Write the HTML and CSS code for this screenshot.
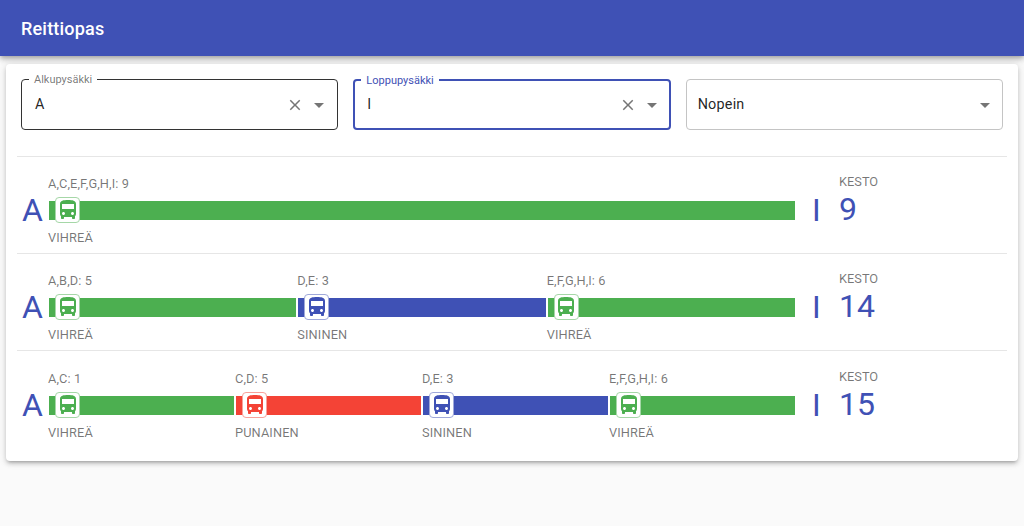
FILE: index.html
```html
<!DOCTYPE html>
<html lang="fi">
<head>
    <meta charset="UTF-8">
    <meta name="viewport" content="width=device-width, initial-scale=1.0">
    <title>Reittiopas</title>
    <link rel="stylesheet" href="styles.css">
</head>
<body>
    <svg class="defs" width="0" height="0">
        <symbol id="bus" viewBox="0 0 24 24">
            <path d="M4 16c0 .88.39 1.67 1 2.22V20c0 .55.45 1 1 1h1c.55 0 1-.45 1-1v-1h8v1c0 .55.45 1 1 1h1c.55 0 1-.45 1-1v-1.78c.61-.55 1-1.34 1-2.22V6c0-3.5-3.58-4-8-4s-8 .5-8 4v10zm3.5 1c-.83 0-1.5-.67-1.5-1.5S6.670 14 7.500 14s1.500.67 1.500 1.500S8.330 17 7.500 17zm9 0c-.83 0-1.500-.67-1.500-1.500s.67-1.500 1.500-1.500 1.500.67 1.500 1.500-.67 1.500-1.500 1.500zm1.500-6H6V6h12v5z"/>
        </symbol>
        <symbol id="clear" viewBox="0 0 24 24">
            <path d="M19 6.410 17.590 5 12 10.590 6.410 5 5 6.410 10.590 12 5 17.590 6.410 19 12 13.410 17.590 19 19 17.590 13.410 12z"/>
        </symbol>
        <symbol id="arrow" viewBox="0 0 24 24">
            <path d="M7 10l5 5 5-5z"/>
        </symbol>
    </svg>

    <header class="appbar">
        <h1>Reittiopas</h1>
    </header>

    <main class="kortti">
        <form class="haku">
            <div class="kentta aktiivinen-tumma">
                <span class="otsikko">Alkupysäkki</span>
                <span class="arvo">A</span>
                <svg class="ikoni tyhjenna"><use href="#clear"/></svg>
                <svg class="ikoni nuoli"><use href="#arrow"/></svg>
            </div>
            <div class="kentta aktiivinen">
                <span class="otsikko">Loppupysäkki</span>
                <span class="arvo">I</span>
                <svg class="ikoni tyhjenna"><use href="#clear"/></svg>
                <svg class="ikoni nuoli"><use href="#arrow"/></svg>
            </div>
            <div class="kentta valinta">
                <span class="arvo">Nopein</span>
                <svg class="ikoni nuoli"><use href="#arrow"/></svg>
            </div>
        </form>

        <section class="reitti">
            <div class="pysakki">A</div>
            <div class="osat">
                <div class="osa vihrea">
                    <div class="pysakit">A,C,E,F,G,H,I: 9</div>
                    <div class="palkki"><span class="bussi"><svg><use href="#bus"/></svg></span></div>
                    <div class="linja">VIHREÄ</div>
                </div>
            </div>
            <div class="pysakki loppu">I</div>
            <div class="kesto"><span>KESTO</span><strong>9</strong></div>
        </section>

        <section class="reitti">
            <div class="pysakki">A</div>
            <div class="osat">
                <div class="osa vihrea">
                    <div class="pysakit">A,B,D: 5</div>
                    <div class="palkki"><span class="bussi"><svg><use href="#bus"/></svg></span></div>
                    <div class="linja">VIHREÄ</div>
                </div>
                <div class="osa sininen">
                    <div class="pysakit">D,E: 3</div>
                    <div class="palkki"><span class="bussi"><svg><use href="#bus"/></svg></span></div>
                    <div class="linja">SININEN</div>
                </div>
                <div class="osa vihrea">
                    <div class="pysakit">E,F,G,H,I: 6</div>
                    <div class="palkki"><span class="bussi"><svg><use href="#bus"/></svg></span></div>
                    <div class="linja">VIHREÄ</div>
                </div>
            </div>
            <div class="pysakki loppu">I</div>
            <div class="kesto"><span>KESTO</span><strong>14</strong></div>
        </section>

        <section class="reitti">
            <div class="pysakki">A</div>
            <div class="osat">
                <div class="osa vihrea">
                    <div class="pysakit">A,C: 1</div>
                    <div class="palkki"><span class="bussi"><svg><use href="#bus"/></svg></span></div>
                    <div class="linja">VIHREÄ</div>
                </div>
                <div class="osa punainen">
                    <div class="pysakit">C,D: 5</div>
                    <div class="palkki"><span class="bussi"><svg><use href="#bus"/></svg></span></div>
                    <div class="linja">PUNAINEN</div>
                </div>
                <div class="osa sininen">
                    <div class="pysakit">D,E: 3</div>
                    <div class="palkki"><span class="bussi"><svg><use href="#bus"/></svg></span></div>
                    <div class="linja">SININEN</div>
                </div>
                <div class="osa vihrea">
                    <div class="pysakit">E,F,G,H,I: 6</div>
                    <div class="palkki"><span class="bussi"><svg><use href="#bus"/></svg></span></div>
                    <div class="linja">VIHREÄ</div>
                </div>
            </div>
            <div class="pysakki loppu">I</div>
            <div class="kesto"><span>KESTO</span><strong>15</strong></div>
        </section>
    </main>
</body>
</html>
```

FILE: styles.css
```css
* {
    box-sizing: border-box;
}

body {
    font-family: Roboto, Arial, sans-serif;
    background-color: #fafafa;
    margin: 0;
    height: 526px;
    overflow: hidden;
}

.defs {
    display: block;
    height: 0;
}

.appbar {
    background-color: #3f51b5;
    color: white;
    height: 56px;
    padding: 0 21px;
    display: flex;
    align-items: center;
    box-shadow: 0 2px 4px -1px rgba(0,0,0,0.2), 0 4px 5px 0 rgba(0,0,0,0.14), 0 1px 10px 0 rgba(0,0,0,0.12);
}

.appbar h1 {
    margin: 0;
    font-size: 18px;
    font-weight: 500;
    letter-spacing: 0.2px;
}

.kortti {
    background-color: white;
    margin: 8px 6px 0;
    height: 397px;
    padding: 15px 11px 0;
    border-radius: 4px;
    box-shadow: 0 3px 3px -2px rgba(0,0,0,0.2), 0 3px 4px 0 rgba(0,0,0,0.14), 0 1px 8px 0 rgba(0,0,0,0.12);
}

.haku {
    display: grid;
    grid-template-columns: repeat(3, 1fr);
    column-gap: 15px;
    padding: 0 4px;
    height: 78px;
    border-bottom: 1px solid #e6e6e6;
}

.kentta {
    position: relative;
    height: 51px;
    border: 1px solid #c4c4c4;
    border-radius: 4px;
    display: flex;
    align-items: center;
    padding: 0 12px 0 13px;
    font-size: 14.4px;
    color: rgba(0,0,0,0.87);
}

.aktiivinen-tumma {
    border-color: #333;
}

.aktiivinen {
    border: 2px solid #3f51b5;
    padding: 0 11px 0 12px;
}

.otsikko {
    position: absolute;
    top: -6px;
    left: 7px;
    padding: 0 5px;
    background-color: white;
    font-size: 11px;
    line-height: 12px;
    color: rgba(0,0,0,0.54);
}

.aktiivinen .otsikko {
    color: #3f51b5;
    left: 6px;
}

.arvo {
    flex: 1;
    letter-spacing: 0.2px;
}

.valinta .arvo {
    margin-left: -2px;
}

.ikoni {
    fill: rgba(0,0,0,0.54);
    flex: none;
}

.tyhjenna {
    width: 18px;
    height: 18px;
    margin-right: 3px;
}

.nuoli {
    width: 24px;
    height: 24px;
    margin-right: -6px;
}

.valinta .nuoli {
    margin-right: -7px;
}

.reitti {
    height: 97px;
    padding: 0 0 0 5px;
    display: flex;
    align-items: center;
    border-bottom: 1px solid #e6e6e6;
}

.reitti:last-child {
    border-bottom: none;
}

.pysakki {
    width: 27px;
    flex: none;
    margin-top: 10px;
    font-size: 32px;
    line-height: 34px;
    color: #3f51b5;
}

.pysakki.loppu {
    width: 44px;
    padding-left: 17px;
}

.osat {
    width: 746px;
    flex: none;
    padding-top: 12px;
    display: flex;
}

.osa {
    flex: 1;
    padding-right: 2px;
    color: rgba(0,0,0,0.54);
    font-size: 12.8px;
    line-height: 14px;
}

.osa:last-child {
    padding-right: 0;
}

.palkki {
    position: relative;
    height: 19px;
    margin: 10px 0 11px;
}

.pysakit,
.linja {
    margin-left: -1px;
    letter-spacing: 0.1px;
}

.bussi {
    position: absolute;
    left: 6px;
    top: -4px;
    width: 25px;
    height: 26px;
    background-color: white;
    border: 1px solid;
    border-radius: 4px;
    display: flex;
    align-items: center;
    justify-content: center;
}

.bussi svg {
    width: 24px;
    height: 24px;
    flex: none;
    fill: currentColor;
}

.vihrea .palkki { background-color: #4caf50; }
.vihrea .bussi { color: #4caf50; border-color: #a5d7a7; }
.sininen .palkki { background-color: #3f51b5; }
.sininen .bussi { color: #3f51b5; border-color: #9fa8da; }
.punainen .palkki { background-color: #f44336; }
.punainen .bussi { color: #f44336; border-color: #f9a19a; }

.kesto {
    margin-top: -6px;
    display: flex;
    flex-direction: column;
    width: 100px;
}

.kesto span {
    font-size: 12.8px;
    line-height: 14px;
    color: rgba(0,0,0,0.54);
}

.kesto strong {
    font-size: 32px;
    line-height: 40px;
    font-weight: 400;
    color: #3f51b5;
}
```
